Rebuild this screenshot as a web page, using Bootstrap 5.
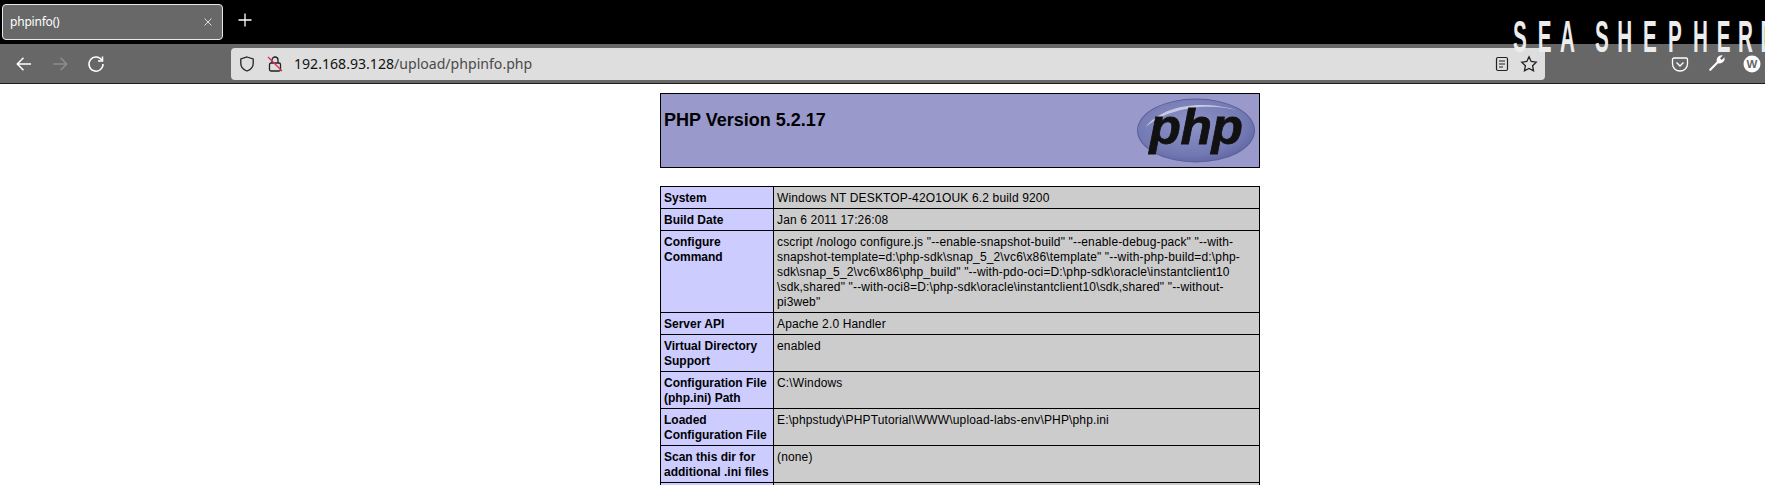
<!DOCTYPE html>
<html lang="en"><head><meta charset="utf-8"><title>phpinfo()</title>
<link href="https://cdn.jsdelivr.net/npm/bootstrap@5.3.0/dist/css/bootstrap.min.css" rel="stylesheet">
<style>
html,body{height:485px;overflow:hidden;background:#fff}
body{font-family:"Liberation Sans",Arial,sans-serif;position:relative}
.chrome-top{height:44px;background:#000;padding:4px 0 0 2px}
.tab-pill{width:221px;height:36px;background:#686868;border:1px solid #e8e8e8;border-radius:4px;color:#fff;font:12px/34px "Noto Sans",sans-serif;padding:0 9px 0 7px;letter-spacing:-.2px}
.tab-new{width:24px;height:24px;margin-left:10px}
.chrome-bar{height:40px;background:#676767;border-bottom:1px solid #1c1c1c}
.nav-ico{width:20px;height:20px;flex:none}
.nav-first{margin-left:14px}
.nav-next{margin-left:16px}
.addr{position:absolute;left:231px;top:48px;width:1314px;height:32px;background:#dedede;border-radius:4px;font:14.1px/32px "Noto Sans",sans-serif;color:#4a4a4a;padding-left:63px}
.addr b{font-weight:400;color:#111}
.brand-art{position:absolute;left:1511px;top:16px;width:254px;height:44px;pointer-events:none}
.page-wrap{margin-left:660px;width:600px;padding-top:9px}
.info-tbl{width:600px;border-collapse:collapse;font-size:12px;line-height:15px;color:#000;margin-bottom:18px}
.info-tbl td{border:1px solid #000;padding:4px 3px 2px;vertical-align:baseline}
.info-tbl td.ekey{background:#ccf;font-weight:700;width:113px}
.info-tbl td.vval{background:#ccc;letter-spacing:.15px}
.info-tbl td.hcell{background:#99c;font-weight:700;height:74px;position:relative;vertical-align:top;padding:3px}
.blank-row td{height:22px}
.title-h{font-size:18px;font-weight:700;line-height:21px;margin:13px 0 0 0}
.logo-art{position:absolute;right:3px;top:3px;width:120px;height:67px}
</style></head>
<body>
<div class="chrome-top d-flex align-items-start">
  <div class="tab-pill d-flex justify-content-between align-items-center"><span>phpinfo()</span>
    <svg width="10" height="10" viewBox="0 0 10 10"><path d="M1.500 1.500l7 7M8.500 1.500l-7 7" stroke="#ddd" stroke-width="1"/></svg></div>
  <svg class="tab-new mt-1" viewBox="0 0 24 24"><path d="M12 5.500v13M5.500 12h13" stroke="#fff" stroke-width="1.300"/></svg>
</div>
<div class="chrome-bar d-flex align-items-center">
  <svg class="nav-ico nav-first" viewBox="0 0 20 20" fill="none" stroke="#fff" stroke-width="1.500"><path d="M17 10H3.500M9.500 3.800 3.300 10l6.200 6.200"/></svg>
  <svg class="nav-ico nav-next" viewBox="0 0 20 20" fill="none" stroke="#8e8e8e" stroke-width="1.500"><path d="M3 10h13.500M10.500 3.800 16.700 10l-6.200 6.200"/></svg>
  <svg class="nav-ico nav-next" viewBox="0 0 20 20" fill="none" stroke="#fff" stroke-width="1.500"><path d="M15.800 6.200A7 7 0 1 0 17 10"/><path d="M16.500 2.500v4.500H12"/></svg>
</div>
<div class="addr">
  <svg class="position-absolute" style="left:7px;top:7px" width="18" height="18" viewBox="0 0 18 18" fill="none" stroke="#222" stroke-width="1.300"><path d="M9 2 15.200 4v4.500c0 3.800-2.800 6.200-6.200 7.500-3.400-1.300-6.200-3.700-6.200-7.500V4z"/></svg>
  <svg class="position-absolute" style="left:35px;top:7px" width="18" height="18" viewBox="0 0 18 18" fill="none"><rect x="3.500" y="8" width="11" height="8" rx="1.500" stroke="#222" stroke-width="1.300"/><path d="M6 8V5a3 3 0 0 1 6 0v3" stroke="#222" stroke-width="1.300"/><path d="M2 2l14 14" stroke="#e2264d" stroke-width="1.300"/></svg>
  <span><b>192.168.93.128</b>/upload/phpinfo.php</span>
  <svg class="position-absolute" style="left:1263px;top:8px" width="16" height="16" viewBox="0 0 16 16" fill="none" stroke="#222" stroke-width="1.200"><rect x="2.500" y="1.500" width="11" height="13" rx="1.500"/><path d="M5 5h6M5 8h6M5 11h4"/></svg>
  <svg class="position-absolute" style="left:1289px;top:7px" width="18" height="18" viewBox="0 0 18 18" fill="none" stroke="#222" stroke-width="1.300"><path d="M9 1.800l2.200 4.700 5 .7-3.600 3.500.9 5.100L9 13.400l-4.500 2.400.9-5.100L1.800 7.200l5-.7z"/></svg>
</div>
<svg class="position-absolute" style="left:1671px;top:55px" width="18" height="18" viewBox="0 0 18 18" fill="none" stroke="#fff" stroke-width="1.300"><path d="M3 3h12a1.500 1.500 0 0 1 1.500 1.500V9a7.500 7 0 0 1-15 0V4.500A1.500 1.500 0 0 1 3 3z"/><path d="M5.500 7.500 9 11l3.500-3.500"/></svg>
<svg class="position-absolute" style="left:1708px;top:54px" width="18" height="18" viewBox="0 0 18 18" fill="#fff"><path d="M16.500 3.200 13.800 6 12 4.200l2.700-2.700a5 5 0 0 0-6 6.300L1.500 15a1 1 0 0 0 1.500 1.500l7.200-7.200a5 5 0 0 0 6.300-6.100z"/></svg>
<svg class="position-absolute" style="left:1743px;top:55px" width="18" height="18" viewBox="0 0 18 18"><circle cx="9" cy="9" r="8.500" fill="#fff"/><text x="9" y="13" text-anchor="middle" font-family="Liberation Sans" font-weight="700" font-size="11.500" fill="#676767">W</text></svg>
<svg class="brand-art" viewBox="0 0 254 44"><text x="4 57 104 150 179 226 281 334 387 438 483 531" y="36" font-family="Liberation Sans" font-weight="700" font-size="44" fill="#ececec" transform="scale(.47 1)">SEA SHEPHERD</text></svg>

<div class="page-wrap">
<table class="info-tbl"><tr><td class="hcell">
  <svg class="logo-art" viewBox="0 0 120 67"><defs><radialGradient id="pg" cx=".45" cy=".4" r=".7"><stop offset="0" stop-color="#8f94c8"/><stop offset=".7" stop-color="#7278b2"/><stop offset="1" stop-color="#5a5f9c"/></radialGradient></defs>
    <ellipse cx="60" cy="33.500" rx="59" ry="32" fill="#5a5f96"/><ellipse cx="60" cy="33.500" rx="58" ry="31" fill="url(#pg)"/><path d="M10 30C22 12 60 0 104 14 70 4 30 12 10 30z" fill="#dfe0f0" opacity=".75"/>
    <text transform="translate(60 47) scale(1.03 1)" text-anchor="middle" font-family="Liberation Sans" font-style="italic" font-weight="700" font-size="50" fill="#111" stroke="#111" stroke-width=".8" letter-spacing="-.5">php</text></svg>
  <div class="title-h">PHP Version 5.2.17</div></td></tr></table>
<table class="info-tbl">
<tr><td class="ekey">System</td><td class="vval">Windows NT DESKTOP-42O1OUK 6.2 build 9200</td></tr>
<tr><td class="ekey">Build Date</td><td class="vval">Jan 6 2011 17:26:08</td></tr>
<tr><td class="ekey">Configure Command</td><td class="vval">cscript /nologo configure.js "--enable-snapshot-build" "--enable-debug-pack" "--with-<br>snapshot-template=d:\php-sdk\snap_5_2\vc6\x86\template" "--with-php-build=d:\php-<br>sdk\snap_5_2\vc6\x86\php_build" "--with-pdo-oci=D:\php-sdk\oracle\instantclient10<br>\sdk,shared" "--with-oci8=D:\php-sdk\oracle\instantclient10\sdk,shared" "--without-<br>pi3web"</td></tr>
<tr><td class="ekey">Server API</td><td class="vval">Apache 2.0 Handler</td></tr>
<tr><td class="ekey">Virtual Directory Support</td><td class="vval">enabled</td></tr>
<tr><td class="ekey">Configuration File (php.ini) Path</td><td class="vval">C:\Windows</td></tr>
<tr><td class="ekey">Loaded Configuration File</td><td class="vval">E:\phpstudy\PHPTutorial\WWW\upload-labs-env\PHP\php.ini</td></tr>
<tr><td class="ekey">Scan this dir for additional .ini files</td><td class="vval">(none)</td></tr>
<tr class="blank-row"><td class="ekey"></td><td class="vval"></td></tr>
</table>
</div>
</body></html>
